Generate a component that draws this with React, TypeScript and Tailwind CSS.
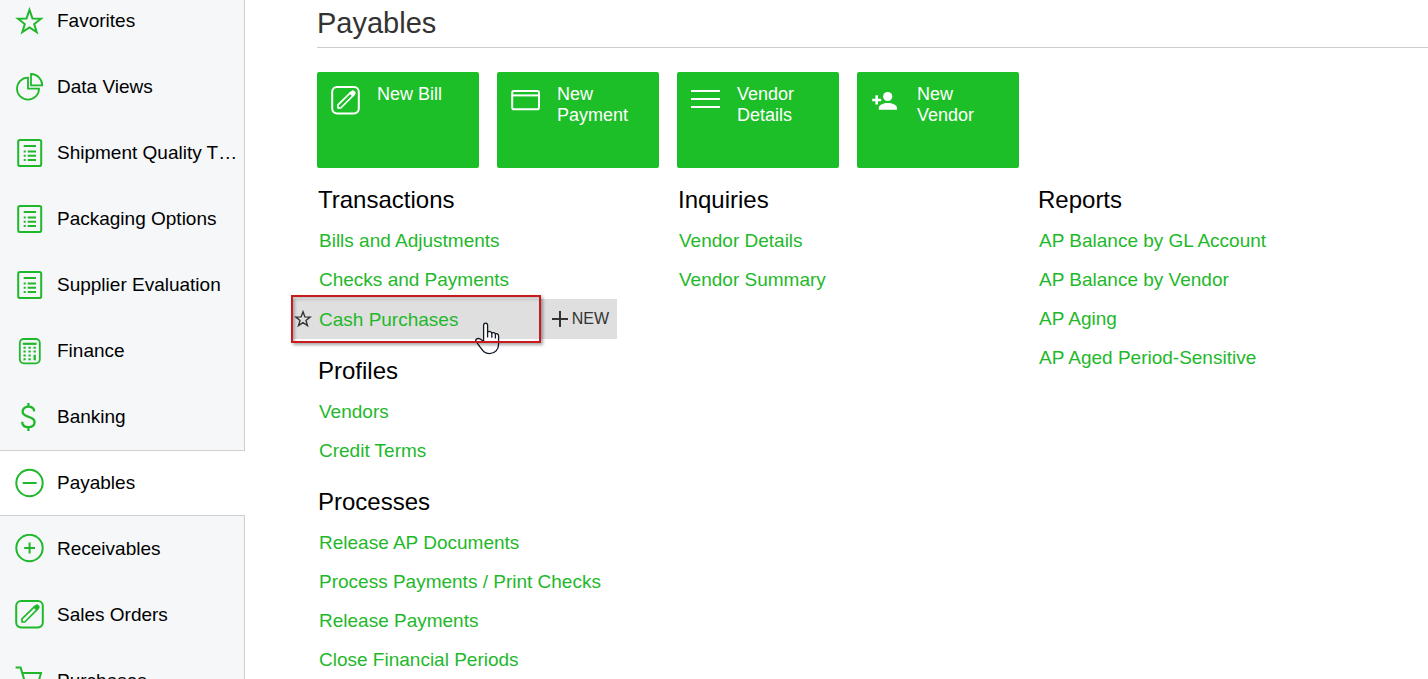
import React from "react";

type IconProps = { className?: string };

function Svg({ className = "", children }: IconProps & { children: React.ReactNode }) {
  return (
    <svg
      viewBox="0 0 30 30"
      className={`h-[30px] w-[30px] shrink-0 ${className}`}
      fill="none"
      stroke="currentColor"
      strokeWidth="2"
      aria-hidden
    >
      {children}
    </svg>
  );
}

function StarIcon() {
  return (
    <Svg>
      <path d="M14.5 3.9 17.5 12.6 26 12.8 19.2 18 21.7 26.2 14.5 21.4 7.3 26.2 9.8 18 3 12.8 11.5 12.6Z" />
    </Svg>
  );
}

function PieIcon() {
  return (
    <Svg>
      <path d="M13 5.7A11 11 0 1 0 24 16.7H13Z" strokeWidth="1.8" />
      <path d="M16 2V13.4H27.2A11.2 11.4 0 0 0 16 2Z" strokeWidth="1.8" />
    </Svg>
  );
}

function ListIcon() {
  return (
    <Svg>
      <rect x="3.2" y="2" width="23" height="26" rx="1.8" />
      <path d="M8.7 7.9H21M8.7 13.6h2M12.7 13.6H21M8.7 17.7h2M12.7 17.7H21M8.7 22h2M12.7 22H21" />
    </Svg>
  );
}

function CalculatorIcon() {
  return (
    <Svg>
      <rect x="4.8" y="3" width="20" height="24.3" rx="4" strokeWidth="1.8" />
      <path d="M7.8 7.8H21.6" strokeWidth="2.2" />
      <path d="M9.6 10.8V25M14.6 10.8V25" strokeWidth="2.3" strokeDasharray="2 1.8" />
      <path d="M19.7 10.8v2M19.7 14.6v2M19.7 18.8v5.4" strokeWidth="2.3" />
    </Svg>
  );
}

function DollarIcon() {
  return (
    <Svg>
      <path
        d="M19.2 9.4C19 6.4 16.8 4.7 13.4 4.7 9.9 4.7 7.6 6.7 7.6 9.5 7.6 16.6 19.6 13 19.6 20.1 19.6 23.1 17.2 25.2 13.4 25.2 9.6 25.2 7.3 23 7.2 19.7M13.4 1V4.7M13.4 25.2V29"
        strokeWidth="2.3"
      />
    </Svg>
  );
}

function MinusCircleIcon() {
  return (
    <Svg>
      <circle cx="14.5" cy="15" r="13.2" />
      <path d="M7.7 15H21.6" strokeWidth="2" />
    </Svg>
  );
}

function PlusCircleIcon() {
  return (
    <Svg>
      <circle cx="14.5" cy="14" r="13.2" />
      <path d="M9.2 14H20M14.6 8.6V19.4" />
    </Svg>
  );
}

function PencilIcon() {
  return (
    <Svg>
      <rect x="1.2" y="1" width="26.6" height="26.4" rx="4.8" />
      <path d="M7 22V18.8L19.8 6.4 22.6 9.2 9.8 22Z" strokeWidth="1.7" strokeLinejoin="round" />
      <path
        d="M18.6 7.2 20.6 5.2C22.4 3.6 25.4 6.4 23.8 8.4L21.8 10.4Z"
        fill="currentColor"
        strokeWidth="0.8"
        strokeLinejoin="round"
      />
    </Svg>
  );
}

function CartIcon() {
  return (
    <Svg>
      <path d="M0.6 1.6H5.6L11 19.6H23.6M7.2 7H26L23.6 15.4H10.2" />
      <circle cx="12.6" cy="24" r="2" />
      <circle cx="22" cy="24" r="2" />
    </Svg>
  );
}

function CardIcon() {
  return (
    <Svg>
      <rect x="1.2" y="5" width="26.8" height="18.2" rx="1.8" />
      <path d="M1.2 9.4H28" />
    </Svg>
  );
}

function LinesIcon() {
  return (
    <Svg>
      <path d="M0 5H29M0 13H29M0 21H29" />
    </Svg>
  );
}

function PersonAddIcon() {
  return (
    <Svg>
      <g fill="currentColor" stroke="none">
        <circle cx="16.7" cy="10.5" r="4.6" />
        <path d="M7.8 23.8V21.7C7.8 18.6 12.8 16.9 16.8 16.9S26 18.6 26 21.7V23.8Z" />
        <path d="M4.4 9.3H7V12.7H10.2V15.3H7V18.6H4.4V15.3H1.2V12.7H4.4Z" />
      </g>
    </Svg>
  );
}

const menu = [
  { label: "Favorites", icon: StarIcon },
  { label: "Data Views", icon: PieIcon },
  { label: "Shipment Quality T…", icon: ListIcon },
  { label: "Packaging Options", icon: ListIcon },
  { label: "Supplier Evaluation", icon: ListIcon },
  { label: "Finance", icon: CalculatorIcon },
  { label: "Banking", icon: DollarIcon },
  { label: "Payables", icon: MinusCircleIcon, active: true },
  { label: "Receivables", icon: PlusCircleIcon },
  { label: "Sales Orders", icon: PencilIcon },
  { label: "Purchases", icon: CartIcon },
];

const tiles = [
  { label: "New Bill", icon: PencilIcon },
  { label: "New Payment", icon: CardIcon },
  { label: "Vendor Details", icon: LinesIcon },
  { label: "New Vendor", icon: PersonAddIcon },
];

const columns = [
  [
    { title: "Transactions", links: ["Bills and Adjustments", "Checks and Payments", "Cash Purchases"] },
    { title: "Profiles", links: ["Vendors", "Credit Terms"] },
    {
      title: "Processes",
      links: [
        "Release AP Documents",
        "Process Payments / Print Checks",
        "Release Payments",
        "Close Financial Periods",
      ],
    },
  ],
  [{ title: "Inquiries", links: ["Vendor Details", "Vendor Summary"] }],
  [
    {
      title: "Reports",
      links: ["AP Balance by GL Account", "AP Balance by Vendor", "AP Aging", "AP Aged Period-Sensitive"],
    },
  ],
];

const hovered = "Cash Purchases";

function Sidebar() {
  return (
    <nav className="w-[245px] shrink-0 overflow-hidden bg-[#f5f7f9]">
      <ul className="-mt-3">
        {menu.map(({ label, icon: Icon, active }) => (
          <li key={label}>
            <a
              href="#"
              aria-current={active ? "page" : undefined}
              className={`flex h-[66px] items-center gap-3 pl-[15px] text-[19px] whitespace-nowrap text-black ${
                active ? "border-y border-[#cdcfd1] bg-white" : "border-r border-[#cdcfd1]"
              }`}
            >
              <span className="text-[#1fb82b]">
                <Icon />
              </span>
              <span>{label}</span>
            </a>
          </li>
        ))}
      </ul>
    </nav>
  );
}

function HandCursor() {
  return (
    <svg viewBox="0 0 26 33" className="absolute top-[23px] left-[182px] h-[33px] w-[26px]" aria-hidden>
      <path
        d="M8.6 18V3.6C8.6 .4 12.6 .4 12.6 3.6V10C13.4 9.2 16.2 9.2 16.8 11 17.6 10.2 19.8 10.4 20.4 12 21.4 11.2 23.6 11.8 23.6 14V22C23.6 27.6 20 31.6 14.6 31.6 9.4 31.6 7.4 28.4 4.9 24.8L.9 19.2C0 17.2 2.8 15.8 5.2 17L8.6 19.4Z"
        fill="#fff"
        stroke="#111827"
        strokeWidth="1.3"
      />
      <path d="M12.6 9.6v6M16.8 10.8v5M20.4 12v4.4" stroke="#111827" strokeWidth="1.3" />
    </svg>
  );
}

function HoveredRow({ label }: { label: string }) {
  return (
    <li className="relative -ml-6 flex h-10 w-[324px] items-center bg-[#dfdfdf]">
      <button type="button" aria-label="Add to favorites" className="w-[26px] pl-px text-[#333]">
        <svg viewBox="0 0 18 18" className="h-[18px] w-[18px]" fill="none" stroke="currentColor" strokeWidth="1.4" aria-hidden>
          <path d="M9 1.8 10.9 6.9 16.2 7.1 12 10.4 13.5 15.6 9 12.6 4.5 15.6 6 10.4 1.8 7.1 7.1 6.9Z" />
        </svg>
      </button>
      <a href="#" className="flex-1 pt-0.5 text-[19px] text-[#1fb82b]">
        {label}
      </a>
      <button type="button" className="flex items-center gap-1 pr-2 text-base text-[#333]">
        <svg viewBox="0 0 16 16" className="h-4 w-4" stroke="currentColor" strokeWidth="2" aria-hidden>
          <path d="M8 0V16M0 8H16" />
        </svg>
        NEW
      </button>
      <HandCursor />
      <span className="pointer-events-none absolute -top-1 -left-0.5 h-12 w-[250px] border-2 border-[#c91a1c] shadow-[2px_2px_3px_rgba(0,0,0,0.35),inset_2px_2px_3px_rgba(0,0,0,0.25)]" />
    </li>
  );
}

function Section({ title, links }: { title: string; links: string[] }) {
  return (
    <section>
      <h2 className="flex h-[42px] items-center pl-px text-2xl text-black">{title}</h2>
      <ul>
        {links.map((label) =>
          label === hovered ? (
            <HoveredRow key={label} label={label} />
          ) : (
            <li key={label} className="flex h-[39px] items-center pt-0.5 pl-0.5">
              <a href="#" className="text-[19px] text-[#1fb82b]">
                {label}
              </a>
            </li>
          )
        )}
      </ul>
    </section>
  );
}

export default function App() {
  return (
    <div className="flex h-screen overflow-hidden bg-white font-['Liberation_Sans',Arial,sans-serif]">
      <Sidebar />
      <main className="min-w-0 flex-1 pl-[72px]">
        <h1 className="flex h-12 items-center border-b border-[#cdcdcd] text-[29px] text-[#333]">Payables</h1>
        <div className="mt-6 flex gap-[18px]">
          {tiles.map(({ label, icon: Icon }) => (
            <button
              key={label}
              type="button"
              className="flex h-24 w-[162px] items-start gap-4 rounded-xs bg-[#1cbf27] pt-3 pr-4 pl-3.5 text-left text-lg leading-[21px] text-white"
            >
              <span className="pt-0.5">
                <Icon />
              </span>
              <span>{label}</span>
            </button>
          ))}
        </div>
        <div className="mt-[11px] flex">
          {columns.map((sections) => (
            <div key={sections[0].title} className="flex w-[360px] shrink-0 flex-col gap-[11px]">
              {sections.map((section) => (
                <Section key={section.title} {...section} />
              ))}
            </div>
          ))}
        </div>
      </main>
    </div>
  );
}
